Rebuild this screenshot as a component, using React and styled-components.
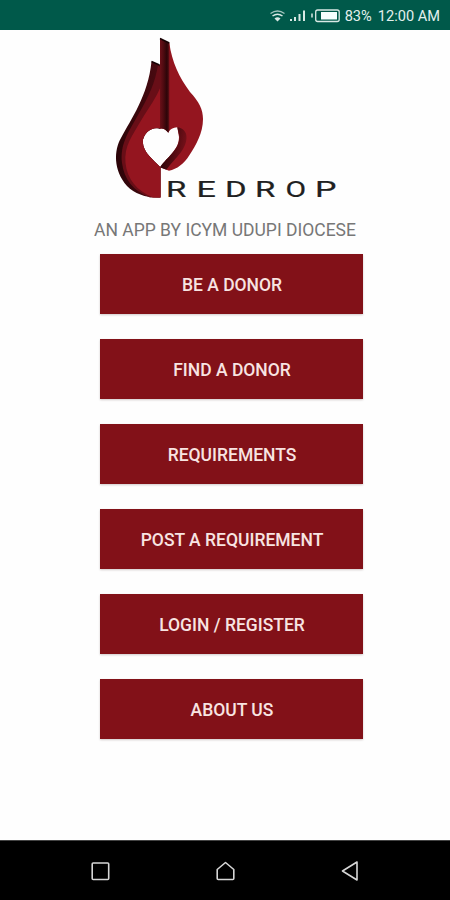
import styled, { createGlobalStyle } from "styled-components";

const GlobalStyle = createGlobalStyle`
  body {
    margin: 0;
    background-color: #fefefe;
    font-family: Roboto, "Liberation Sans", sans-serif;
  }
`;

const Screen = styled.div`
  display: flex;
  flex-direction: column;
  width: 450px;
  height: 900px;
  overflow: hidden;
`;

const StatusBar = styled.header`
  display: flex;
  align-items: center;
  justify-content: flex-end;
  box-sizing: border-box;
  height: 30px;
  padding: 2px 10px 0 0;
  background-color: #00594a;
  color: #e3f0ed;
  font-size: 14.6px;
  svg {
    width: 72px;
    height: 16px;
    margin-right: 4px;
  }
  span {
    width: 28px;
    letter-spacing: -0.1px;
    white-space: nowrap;
  }
  time {
    margin-left: 5px;
    white-space: nowrap;
  }
`;

const Main = styled.main`
  flex: 1;
  display: flex;
  flex-direction: column;
  align-items: center;
  padding-top: 4px;
`;

const Logo = styled.svg`
  width: 240px;
  height: 170px;
  text {
    font-family: Roboto, sans-serif;
    font-size: 22px;
    fill: #202020;
    stroke: #202020;
    stroke-width: 0.2;
  }
`;

const Tagline = styled.p`
  margin: 15px 0 0;
  height: 30px;
  line-height: 22px;
  font-size: 17.5px;
  color: #777;
  white-space: nowrap;
`;

const Menu = styled.nav`
  display: flex;
  flex-direction: column;
  gap: 25px;
  margin: 4.5px 0 0 13px;
  button {
    width: 263px;
    height: 60px;
    padding: 2px 0 0 1px;
    border: none;
    background-color: #821118;
    box-shadow: 0 1px 2px #cfc9c9;
    color: #f8e4e2;
    font-family: inherit;
    font-size: 17.5px;
    font-weight: 500;
  }
`;

const NavBar = styled.footer`
  display: flex;
  align-items: center;
  justify-content: space-between;
  box-sizing: border-box;
  height: 60px;
  padding: 0 90px;
  background-color: #000;
  border-top: 1px solid #444;
  svg {
    width: 20px;
    height: 20px;
    fill: none;
    stroke: #d6d6d6;
    stroke-width: 1.6;
    stroke-linejoin: round;
  }
`;

// one x for each letter of the wordmark
const letters = [
  ["R", 168, 1.5],
  ["E", 198.5, 1.55],
  ["D", 227, 1.5],
  ["R", 257, 1.5],
  ["O", 287.5, 1.36],
  ["P", 317, 1.54],
];

const items = [
  "BE A DONOR",
  "FIND A DONOR",
  "REQUIREMENTS",
  "POST A REQUIREMENT",
  "LOGIN / REGISTER",
  "ABOUT US",
];

const StatusIcons = () => (
  <svg viewBox="268 8 72 16" fill="none" stroke="#d9e9e5">
    <path d="M269.5 13.5Q276.5 8.5 283.5 13.5" strokeWidth="1.3" opacity=".75" />
    <path d="M271.5 16Q276.5 12.3 281.5 16" strokeWidth="1.5" />
    <path d="M273.5 18.5Q276.5 16 279.5 18.5L276.5 21.5Z" fill="#d9e9e5" stroke="none" />
    <path d="M290 19v2M294 17v4M298.5 14v7M303 10.5v10.5" strokeWidth="2" />
    <path d="M311 13.5v4" strokeWidth="1.5" />
    <rect x="314.7" y="10" width="23.5" height="11.5" rx="2" strokeWidth="1.3" />
    <rect x="320" y="12" width="16" height="7.5" fill="#f6ffff" stroke="none" />
  </svg>
);

const DropLogo = () => (
  <Logo viewBox="105 34 240 170">
    <defs>
      <linearGradient id="side" x1="0" y1="0" x2="1" y2="0">
        <stop offset="0" stopColor="#2b0408" />
        <stop offset="1" stopColor="#4a0a11" />
      </linearGradient>
      <linearGradient id="spine" x1="0" y1="0" x2="1" y2="0">
        <stop offset="0" stopColor="#6b1018" />
        <stop offset="0.4" stopColor="#4c0a10" />
        <stop offset="0.75" stopColor="#2b0508" />
        <stop offset="1" stopColor="#610f17" />
      </linearGradient>
      <linearGradient id="fold" x1="0" y1="0" x2="1" y2="0.3">
        <stop offset="0.3" stopColor="#300509" />
        <stop offset="1" stopColor="#751019" />
      </linearGradient>
    </defs>
    {/* left half */}
    <path
      fill="url(#side)"
      d="M151.5 61.5L160 65V129C151 126 143 134 142.8 142C143 153 154 160 160.5 167.5V197.5C146 198 135 194 127 186C113 170 114 150 121 138C131 119 148 96 151.5 61.5Z"
    />
    <path
      fill="#680e17"
      d="M161 68V128.5C151 126 143 134 142.8 142C143 153 154 160 160.5 167.5V197.5H150C133 191 124 179 122 163C120 144 128 133 138 115C149 96 155 83 158 65Z"
    />
    <path
      fill="#94151f"
      d="M161 86V128.5C151 126 143 134 142.8 142C143 153 154 160 160.5 167.5V197.5H153C137 191 127 179 125.5 163C124 146 132 136 142 119C150 106 156 98 161 86Z"
    />
    {/* right half */}
    <path
      fill="#94151f"
      d="M160 38.5L169.3 43C172 62 179 77 190 92C199 102 203 109 203 119C203 133 196 145 189.5 155C184 164 177 169 169 170.8L160 167.3C168 156 179 150 179 137L177.3 127.3C173 128 170 129 168.3 132.7C166 129.5 163 128 160 128.5Z"
    />
    <path
      fill="url(#spine)"
      d="M160 38.5L169.3 43V130.5L168.3 132.7C166 129.5 163 128 160 128.5Z"
    />
    <path
      fill="url(#fold)"
      d="M177.3 127.3C182 128 187 131 186.5 138C186 151 173 160 166.5 169.8L160 167.3C168 156 179 150 179.5 137Z"
    />
    <path d="M160 38.5L169.3 43M151.5 61.5L159.5 65" stroke="#160204" strokeWidth="1.5" />
    {letters.map(([char, x, stretch], i) => (
      <text key={i} transform={`translate(${x - 2} 196.5) scale(${stretch} 1)`}>
        {char}
      </text>
    ))}
  </Logo>
);

export default function App() {
  return (
    <>
      <GlobalStyle />
      <Screen>
        <StatusBar>
          <StatusIcons />
          <span>83%</span>
          <time>12:00 AM</time>
        </StatusBar>
        <Main>
          <DropLogo />
          <Tagline>AN APP BY ICYM UDUPI DIOCESE</Tagline>
          <Menu>
            {items.map((item) => (
              <button key={item}>{item}</button>
            ))}
          </Menu>
        </Main>
        <NavBar>
          <svg viewBox="0 0 20 20">
            <rect x="2.2" y="2" width="16.5" height="16.5" rx="1" />
          </svg>
          <svg viewBox="0 0 20 20">
            <path d="M2.2 8.5L10.5 1.5L18.8 8.5V17.5Q18.8 18.5 17.8 18.5H3.2Q2.2 18.5 2.2 17.5Z" />
          </svg>
          <svg viewBox="0 0 20 20">
            <path d="M2.5 10L17 1V19Z" />
          </svg>
        </NavBar>
      </Screen>
    </>
  );
}
